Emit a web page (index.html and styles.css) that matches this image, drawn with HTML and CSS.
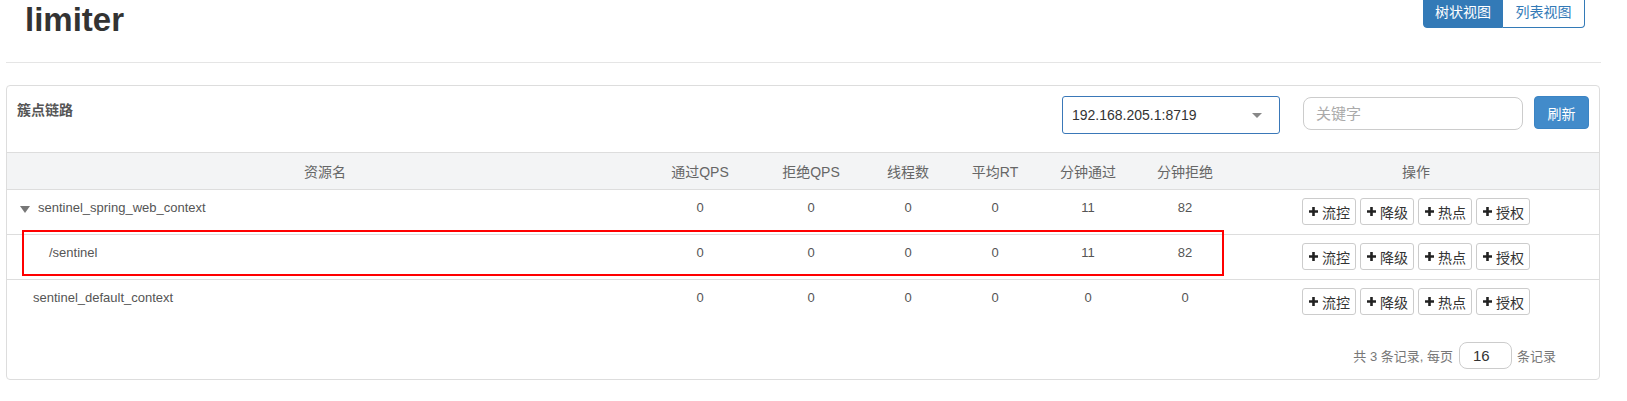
FILE: index.html
```html
<!DOCTYPE html>
<html lang="zh-CN">
<head>
<meta charset="utf-8">
<title>limiter</title>
<link rel="stylesheet" href="styles.css">
</head>
<body>
<div class="page">
  <div class="top">
    <h1 class="title">limiter</h1>
    <div class="seg-group">
      <span class="seg seg-active">树状视图</span><span class="seg">列表视图</span>
    </div>
  </div>
  <hr class="rule">
  <div class="panel">
    <div class="panel-head">
      <div class="panel-title">簇点链路</div>
      <div class="tools">
        <div class="select"><span>192.168.205.1:8719</span><span class="caret"></span></div>
        <input class="search" type="text" placeholder="关键字">
        <button class="refresh" type="button">刷新</button>
      </div>
    </div>
    <table class="grid">
      <colgroup>
        <col class="c-name"><col class="c-a"><col class="c-b"><col class="c-c"><col class="c-d"><col class="c-e"><col class="c-f"><col>
      </colgroup>
      <thead>
        <tr><th>资源名</th><th>通过QPS</th><th>拒绝QPS</th><th>线程数</th><th>平均RT</th><th>分钟通过</th><th>分钟拒绝</th><th>操作</th></tr>
      </thead>
      <tbody>
        <tr>
          <td class="name lvl0"><span class="tri"></span>sentinel_spring_web_context</td>
          <td class="num">0</td><td class="num">0</td><td class="num">0</td><td class="num">0</td><td class="num">11</td><td class="num">82</td>
          <td class="ops"><div class="op-row">
            <button class="op"><svg class="plus" viewBox="0 0 9 9"><path d="M3.2 0h2.6v3.2H9v2.6H5.8V9H3.2V5.8H0V3.2h3.2z"/></svg>流控</button>
            <button class="op"><svg class="plus" viewBox="0 0 9 9"><path d="M3.2 0h2.6v3.2H9v2.6H5.8V9H3.2V5.8H0V3.2h3.2z"/></svg>降级</button>
            <button class="op"><svg class="plus" viewBox="0 0 9 9"><path d="M3.2 0h2.6v3.2H9v2.6H5.8V9H3.2V5.8H0V3.2h3.2z"/></svg>热点</button>
            <button class="op"><svg class="plus" viewBox="0 0 9 9"><path d="M3.2 0h2.6v3.2H9v2.6H5.8V9H3.2V5.8H0V3.2h3.2z"/></svg>授权</button>
          </div></td>
        </tr>
        <tr>
          <td class="name lvl1">/sentinel</td>
          <td class="num">0</td><td class="num">0</td><td class="num">0</td><td class="num">0</td><td class="num">11</td><td class="num">82</td>
          <td class="ops"><div class="op-row">
            <button class="op"><svg class="plus" viewBox="0 0 9 9"><path d="M3.2 0h2.6v3.2H9v2.6H5.8V9H3.2V5.8H0V3.2h3.2z"/></svg>流控</button>
            <button class="op"><svg class="plus" viewBox="0 0 9 9"><path d="M3.2 0h2.6v3.2H9v2.6H5.8V9H3.2V5.8H0V3.2h3.2z"/></svg>降级</button>
            <button class="op"><svg class="plus" viewBox="0 0 9 9"><path d="M3.2 0h2.6v3.2H9v2.6H5.8V9H3.2V5.8H0V3.2h3.2z"/></svg>热点</button>
            <button class="op"><svg class="plus" viewBox="0 0 9 9"><path d="M3.2 0h2.6v3.2H9v2.6H5.8V9H3.2V5.8H0V3.2h3.2z"/></svg>授权</button>
          </div></td>
        </tr>
        <tr>
          <td class="name lvl2">sentinel_default_context</td>
          <td class="num">0</td><td class="num">0</td><td class="num">0</td><td class="num">0</td><td class="num">0</td><td class="num">0</td>
          <td class="ops"><div class="op-row">
            <button class="op"><svg class="plus" viewBox="0 0 9 9"><path d="M3.2 0h2.6v3.2H9v2.6H5.8V9H3.2V5.8H0V3.2h3.2z"/></svg>流控</button>
            <button class="op"><svg class="plus" viewBox="0 0 9 9"><path d="M3.2 0h2.6v3.2H9v2.6H5.8V9H3.2V5.8H0V3.2h3.2z"/></svg>降级</button>
            <button class="op"><svg class="plus" viewBox="0 0 9 9"><path d="M3.2 0h2.6v3.2H9v2.6H5.8V9H3.2V5.8H0V3.2h3.2z"/></svg>热点</button>
            <button class="op"><svg class="plus" viewBox="0 0 9 9"><path d="M3.2 0h2.6v3.2H9v2.6H5.8V9H3.2V5.8H0V3.2h3.2z"/></svg>授权</button>
          </div></td>
        </tr>
      </tbody>
    </table>
    <div class="pager">
      <span>共 3 条记录, 每页</span>
      <input class="page-size" type="text" value="16">
      <span>条记录</span>
    </div>
    <div class="mark"></div>
  </div>
</div>
</body>
</html>
```

FILE: styles.css
```css
* { box-sizing: border-box; }

html, body {
  margin: 0;
  padding: 0;
  background: #fff;
}

body {
  font-family: "Liberation Sans", Arial, "Noto Sans CJK SC", sans-serif;
  color: #333;
  overflow: hidden;
}

.page {
  padding: 0 26px 0 6px;
}

.top {
  display: flex;
  justify-content: space-between;
  align-items: flex-start;
  margin-top: -6px;
  padding: 0 16px 0 19px;
}

.title {
  margin: 6px 0 0 0;
  font-size: 33px;
  line-height: 40px;
  font-weight: bold;
  color: #333;
}

.seg-group {
  display: flex;
}

.seg {
  display: block;
  height: 34px;
  width: 82px;
  line-height: 20px;
  padding: 6px 0;
  text-align: center;
  font-size: 14px;
  font-family: "Noto Sans CJK SC", sans-serif;
  border: 1px solid #337ab7;
  color: #337ab7;
  background: #fff;
}

.seg-active {
  width: 80px;
  background: #337ab7;
  color: #fff;
  border-radius: 4px 0 0 4px;
}

.seg + .seg {
  border-left: 0;
  border-radius: 0 4px 4px 0;
}

.rule {
  border: 0;
  border-top: 1px solid #e5e5e5;
  height: 0;
  margin: 22px 0 22px 0;
}

.panel {
  position: relative;
  border: 1px solid #ddd;
  border-radius: 4px;
  margin-right: 1px;
  background: #fff;
}

.panel-head {
  display: flex;
  justify-content: space-between;
  align-items: flex-start;
  padding: 10px 10px 18px 10px;
}

.panel-title {
  margin-top: 3px;
  font-size: 14px;
  line-height: 20px;
  font-weight: bold;
  color: #555;
  font-family: "Noto Sans CJK SC", sans-serif;
}

.tools {
  display: flex;
  align-items: flex-start;
}

.select {
  width: 218px;
  height: 38px;
  border: 1px solid #3a78b8;
  border-radius: 3px;
  display: flex;
  align-items: center;
  justify-content: space-between;
  padding: 0 17px 0 9px;
  font-size: 14px;
  color: #333;
}

.caret {
  width: 0;
  height: 0;
  border-left: 5px solid transparent;
  border-right: 5px solid transparent;
  border-top: 5px solid #888;
}

.search {
  margin: 1px 0 0 23px;
  width: 220px;
  height: 33px;
  border: 1px solid #ccc;
  border-radius: 8px;
  padding: 0 12px;
  font-size: 15px;
  font-family: "Liberation Sans", "Noto Sans CJK SC", sans-serif;
  color: #333;
  outline: none;
}

.search::placeholder {
  color: #aaa;
}

.refresh {
  margin-left: 11px;
  width: 55px;
  height: 33px;
  border: 1px solid #3b84c4;
  border-radius: 4px;
  background: #428bca;
  color: #fff;
  font-size: 14px;
  font-family: "Noto Sans CJK SC", sans-serif;
  padding: 0;
}

.grid {
  width: 100%;
  border-collapse: collapse;
  table-layout: fixed;
}

.c-name { width: 636px; }
.c-a { width: 114px; }
.c-b { width: 108px; }
.c-c { width: 86px; }
.c-d { width: 88px; }
.c-e { width: 98px; }
.c-f { width: 96px; }

.grid th {
  height: 37px;
  padding: 0;
  background: #f3f4f5;
  border-top: 1px solid #ddd;
  border-bottom: 1px solid #ddd;
  font-weight: normal;
  font-size: 14px;
  color: #666;
  text-align: center;
  vertical-align: middle;
  font-family: "Liberation Sans", "Noto Sans CJK SC", sans-serif;
}

.grid td {
  border-top: 1px solid #ddd;
  padding: 8px 0 9px 0;
  vertical-align: top;
  font-size: 13px;
  line-height: 19px;
  color: #555;
}

.grid tbody tr:first-child td {
  border-top: 0;
}

.num {
  text-align: center;
}

.name {
  white-space: nowrap;
}

.lvl0 { padding-left: 13px !important; }
.lvl1 { padding-left: 42px !important; }
.lvl2 { padding-left: 26px !important; }

.tri {
  display: inline-block;
  width: 0;
  height: 0;
  border-left: 5px solid transparent;
  border-right: 5px solid transparent;
  border-top: 7px solid #777;
  margin-right: 8px;
  vertical-align: -1px;
}

.ops {
  text-align: center;
}

.op-row {
  display: flex;
  justify-content: center;
  gap: 4px;
}

.op {
  display: inline-flex;
  align-items: center;
  gap: 4px;
  height: 27px;
  padding: 0 5px 0 6px;
  border: 1px solid #ccc;
  border-radius: 3px;
  background: #fff;
  color: #333;
  font-size: 14px;
  font-family: "Noto Sans CJK SC", sans-serif;
  line-height: 1;
}

.plus {
  width: 9px;
  height: 9px;
  fill: #222;
}

.pager {
  display: flex;
  justify-content: flex-end;
  align-items: center;
  gap: 5px;
  padding: 18px 43px 10px 0;
  font-size: 13px;
  color: #777;
  font-family: "Liberation Sans", "Noto Sans CJK SC", sans-serif;
}

.page-size {
  width: 53px;
  height: 27px;
  border: 1px solid #ccc;
  border-radius: 8px;
  padding: 0 0 0 13px;
  font-size: 15px;
  color: #333;
  font-family: "Liberation Sans", sans-serif;
  margin-left: 1px;
  outline: none;
}

.mark {
  position: absolute;
  left: 15px;
  top: 144px;
  width: 1202px;
  height: 46px;
  border: 2px solid #ff0000;
  pointer-events: none;
}
```
